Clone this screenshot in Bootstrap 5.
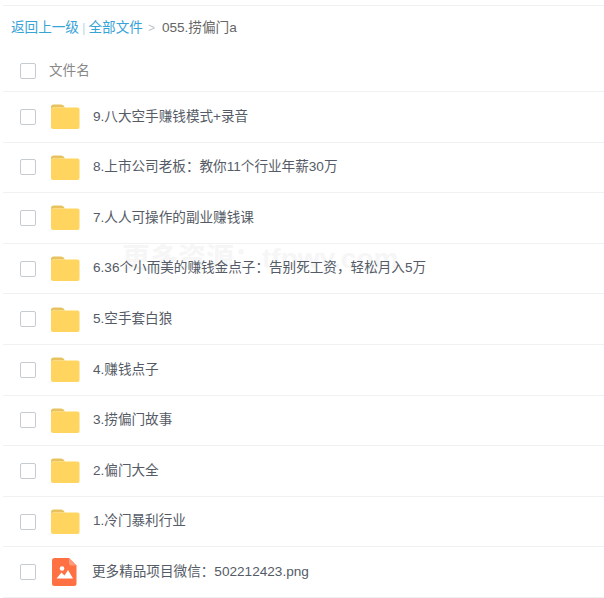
<!DOCTYPE html>
<html lang="en">
<head>
  <meta charset="UTF-8">
  <title>文件列表</title>
  <link href="https://cdn.jsdelivr.net/npm/bootstrap@5.3.0/dist/css/bootstrap.min.css" rel="stylesheet">
  <style>
    body { background: #fff; font-family: "Liberation Sans", "Noto Sans CJK SC", sans-serif; color: #555b66; font-size: 13.6px; overflow: hidden; }
    .file-page { position: relative; margin: 5px 0 0 3px; border-top: 1px solid #f0f1f3; }
    .crumbs { height: 44px; padding-left: 8px; color: #666; }
    .crumbs a { color: #38a3d6; text-decoration: none; }
    .crumbs .sep { color: #c4d8e4; margin: 0 3px; }
    .crumbs .arrow { color: #c0c4cc; margin: 0 7px 0 5px; font-size: 12px; }
    .file-head { height: 42px; color: #888; border-bottom: 1px solid #f0f1f3; padding-left: 17px; }
    .file-head span { padding-top: 2px; }
    .file-row { height: 50.6px; border-bottom: 1px solid #f0f1f3; padding-left: 17px; }
    .tick { width: 16px; height: 16px; border: 1px solid #c6cbd2; border-radius: 2px; background: #fff; flex: none; }
    .file-head .tick { margin-right: 13px; }
    .file-ico { width: 30px; height: 25px; margin: 0 13px 0 14px; flex: none; display: block; }
    .pic-ico { width: 25px; height: 28px; margin: 0 15px 0 16px; flex: none; display: block; }
    .wmark { position: absolute; left: 119px; top: 232px; font-size: 28px; font-weight: 700; color: #f6f6f7; z-index: 0; white-space: nowrap; }
    .file-row span { position: relative; z-index: 1; }
  </style>
</head>
<body>
  <div class="file-page">
    <div class="crumbs d-flex align-items-center">
      <a href="#">返回上一级</a><span class="sep">|</span><a href="#">全部文件</a><span class="arrow">&gt;</span><span>055.捞偏门a</span>
    </div>
    <div class="file-head d-flex align-items-center"><div class="tick"></div><span>文件名</span></div>
    <div id="rows"></div>
    <div class="wmark">更多资源：tfpwy.com</div>
  </div>
  <script src="https://cdn.jsdelivr.net/npm/bootstrap@5.3.0/dist/js/bootstrap.bundle.min.js"></script>
  <script>
    const folder = '<svg class="file-ico" viewBox="0 0 30 25"><path d="M1 3Q1 .5 3.5 .5H11Q13.5 .5 15 3.5H3Q1 3.5 1 6Z" fill="#e8c25c"/><path d="M1 6Q1 3.5 3.5 3.5H27.5Q29.5 3.5 29.5 5.5V23Q29.5 25 27.5 25H3Q1 25 1 23Z" fill="#ffd55f"/></svg>';
    const image = '<svg class="pic-ico" viewBox="0 0 25 28"><path d="M2.5 0H17L24.5 7.5V25.5Q24.5 28 22 28H2.5Q0 28 0 25.5V2.5Q0 0 2.5 0Z" fill="#ff7043"/><path d="M17 0L24.5 7.5H19Q17 7.5 17 5.5Z" fill="#ff9a7a"/><circle cx="10" cy="10.5" r="2.3" fill="#fff"/><path d="M4.5 20.5L9.5 14.5L12.500 17.500L16 12L21 20.500Z" fill="#fff"/></svg>';
    const files = ['9.八大空手赚钱模式+录音', '8.上市公司老板：教你11个行业年薪30万', '7.人人可操作的副业赚钱课', '6.36个小而美的赚钱金点子：告别死工资，轻松月入5万', '5.空手套白狼', '4.赚钱点子', '3.捞偏门故事', '2.偏门大全', '1.冷门暴利行业'];
    let html = '';
    files.forEach(name => {
      html += `<div class="file-row d-flex align-items-center"><div class="tick"></div>${folder}<span>${name}</span></div>`;
    });
    html += `<div class="file-row d-flex align-items-center"><div class="tick"></div>${image}<span>更多精品项目微信：502212423.png</span></div>`;
    document.getElementById('rows').innerHTML = html;
  </script>
</body>
</html>
